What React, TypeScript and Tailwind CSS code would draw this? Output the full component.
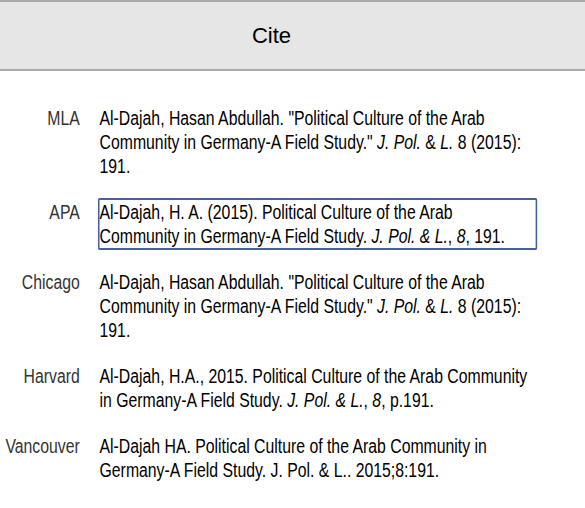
import type { ReactNode } from "react";

type Citation = { style: string; lines: ReactNode[]; selected?: boolean };

// each citation is broken into its display lines
const citations: Citation[] = [
  {
    style: "MLA",
    lines: [
      <>Al-Dajah, Hasan Abdullah. "Political Culture of the Arab</>,
      <>
        Community in Germany-A Field Study." <i>J. Pol.</i> &amp; <i>L.</i> 8 (2015):
      </>,
      <>191.</>,
    ],
  },
  {
    style: "APA",
    selected: true,
    lines: [
      <>Al-Dajah, H. A. (2015). Political Culture of the Arab</>,
      <>
        Community in Germany-A Field Study. <i>J. Pol. &amp; L.</i>, <i>8</i>, 191.
      </>,
    ],
  },
  {
    style: "Chicago",
    lines: [
      <>Al-Dajah, Hasan Abdullah. "Political Culture of the Arab</>,
      <>
        Community in Germany-A Field Study." <i>J. Pol.</i> &amp; <i>L.</i> 8 (2015):
      </>,
      <>191.</>,
    ],
  },
  {
    style: "Harvard",
    lines: [
      <>Al-Dajah, H.A., 2015. Political Culture of the Arab Community</>,
      <>
        in Germany-A Field Study. <i>J. Pol. &amp; L.</i>, <i>8</i>, p.191.
      </>,
    ],
  },
  {
    style: "Vancouver",
    lines: [
      <>Al-Dajah HA. Political Culture of the Arab Community in</>,
      <>Germany-A Field Study. J. Pol. &amp; L.. 2015;8:191.</>,
    ],
  },
];

function CitationRow({ c }: { c: Citation }) {
  return (
    <div className="flex items-start">
      <div className="w-[101px] shrink-0 pt-[2px] text-right text-[20px] leading-[24px] text-[#333]">
        {c.style}
      </div>
      <div
        className={
          "ml-[23px] w-[556px] rounded-[2px] border-x-[2.5px] border-y-2 text-[20px] leading-[24px] text-black " +
          (c.selected ? "border-[#4a5fa0]" : "border-transparent")
        }
      >
        {c.lines.map((line, i) => (
          <div key={i} className="whitespace-nowrap">
            {line}
          </div>
        ))}
      </div>
    </div>
  );
}

export default function App() {
  return (
    <div
      className="h-[508px] w-[585px] overflow-hidden bg-white"
      style={{ fontFamily: '"Liberation Sans", Arial, sans-serif' }}
    >
      <header className="flex h-[71px] items-center justify-center border-y-2 border-[#a9a9a9] bg-[#e6e6e6] pr-[42px]">
        <h1 className="text-[22px] text-black">Cite</h1>
      </header>

      {/* narrow face: lay out wide, then squeeze horizontally */}
      <div className="w-[741px] origin-top-left scale-x-[0.79] pt-[33px]">
        <div className="flex flex-col gap-[18px]">
          {citations.map((c) => (
            <CitationRow key={c.style} c={c} />
          ))}
        </div>
      </div>
    </div>
  );
}
